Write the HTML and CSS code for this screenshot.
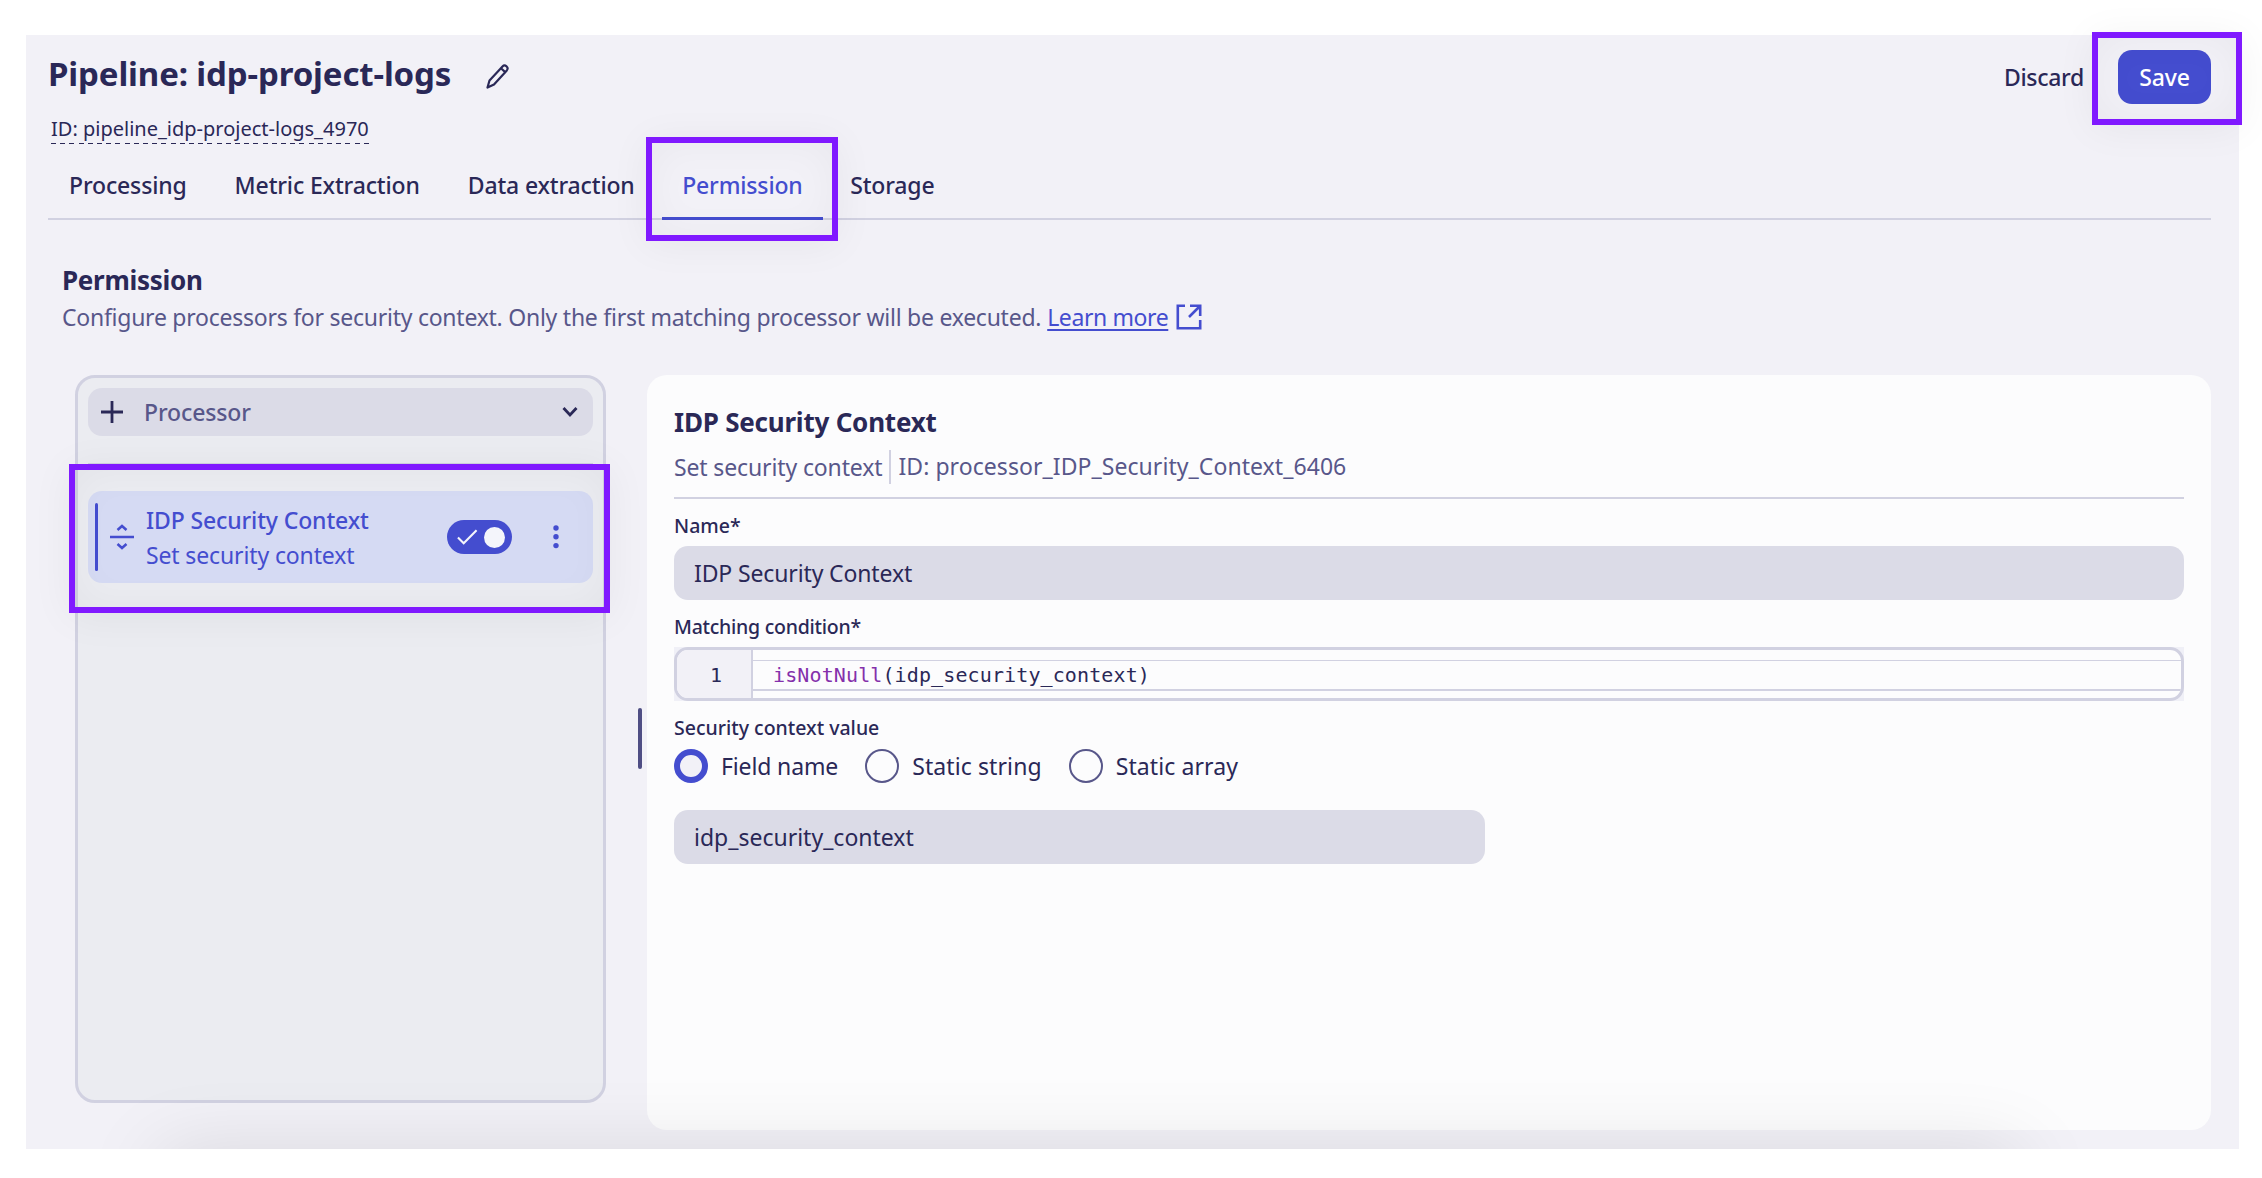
FILE: index.html
```html
<!DOCTYPE html>
<html lang="en">
<head>
<meta charset="utf-8">
<title>Pipeline: idp-project-logs</title>
<link rel="stylesheet" href="styles.css">
</head>
<body>
<main class="page">
  <header class="header">
    <div class="heading">
      <div class="title-row">
        <h1 class="title">Pipeline: idp-project-logs</h1>
        <svg class="pencil" viewBox="0 0 24 26" fill="none" stroke="currentColor" stroke-width="2.200" stroke-linejoin="round"><path d="M1.500 23.500 3.500 16.500 16.500 2.500c1.200-1.300 2.700-1.300 4-.2 1.400 1.200 1.400 2.700.3 4.100L8 20.500zM15 4.200l4.200 3.900"/></svg>
      </div>
      <div class="pipeline-id">ID: pipeline_idp-project-logs_4970</div>
    </div>
    <div class="actions">
      <button class="discard">Discard</button>
      <button class="save">Save</button>
    </div>
  </header>

  <nav class="tabs">
    <a class="tab">Processing</a>
    <a class="tab">Metric Extraction</a>
    <a class="tab">Data extraction</a>
    <a class="tab active">Permission</a>
    <a class="tab">Storage</a>
  </nav>

  <section class="intro">
    <h2 class="intro-title">Permission</h2>
    <p class="intro-text"><span>Configure processors for security context. Only the first matching processor will be executed.</span><a class="learn">Learn more</a>
      <svg class="external" viewBox="0 0 26 26" fill="none" stroke="currentColor" stroke-width="2.600"><path d="M9 1.800H1.800v22.400h22.400V16M14 1.800h10.200V12M24 2 13 13"/></svg>
    </p>
  </section>

  <div class="workspace">
    <aside class="sidebar">
      <button class="add">
        <svg class="plus" viewBox="0 0 22 22" fill="none" stroke="currentColor" stroke-width="2.800"><path d="M11 0v22M0 11h22"/></svg>
        <span class="add-label">Processor</span>
        <svg class="chevron" viewBox="0 0 16 12" fill="none" stroke="currentColor" stroke-width="2.800"><path d="m1.500 2 6.500 7 6.500-7"/></svg>
      </button>
      <div class="divider"></div>
      <div class="processor">
        <span class="marker"></span>
        <svg class="drag" viewBox="0 0 24 24" fill="none" stroke="currentColor" stroke-width="2.500"><path d="M0 12h24M7.500 5 12 1l4.500 4M7.500 19l4.500 4 4.500-4"/></svg>
        <div class="processor-text">
          <div class="processor-name">IDP Security Context</div>
          <div class="processor-kind">Set security context</div>
        </div>
        <span class="toggle">
          <svg class="check" viewBox="0 0 22 16" fill="none" stroke="currentColor" stroke-width="2.200"><path d="m1 8.500 6 6L20.500 1"/></svg>
          <span class="knob"></span>
        </span>
        <svg class="more" viewBox="0 0 6 26" fill="currentColor"><circle cx="3" cy="4" r="2.700"/><circle cx="3" cy="12.800" r="2.700"/><circle cx="3" cy="21.600" r="2.700"/></svg>
      </div>
    </aside>
    <div class="splitter"><span class="grip"></span></div>
    <section class="detail">
      <h2 class="detail-title">IDP Security Context</h2>
      <div class="detail-meta"><span>Set security context</span><span class="detail-id">ID: processor_IDP_Security_Context_6406</span></div>
      <label class="label">Name*</label>
      <div class="input">IDP Security Context</div>
      <label class="label label-condition">Matching condition*</label>
      <div class="editor-frame">
        <div class="editor">
          <div class="gutter">1</div>
          <div class="code"><div class="line"><span class="fn">isNotNull</span>(idp_security_context)</div></div>
        </div>
      </div>
      <label class="label">Security context value</label>
      <div class="radios">
        <div class="option"><span class="radio checked"></span>Field name</div>
        <div class="option option-static"><span class="radio"></span>Static string</div>
        <div class="option option-static"><span class="radio"></span>Static array</div>
      </div>
      <div class="input input-value">idp_security_context</div>
    </section>
  </div>
  <div class="dock"><div class="dock-shadow"></div></div>
  <div class="callout callout-save"></div>
  <div class="callout callout-tab"></div>
  <div class="callout callout-processor"></div>
</main>
</body>
</html>
```
FILE: styles.css
```css
* { box-sizing: border-box; }
body {
  margin: 0;
  background: #fff;
  overflow: hidden;
  font-family: "Noto Sans", "Open Sans", sans-serif;
  font-size: 23px;
  line-height: 32px;
  letter-spacing: -0.130px;
  color: #2a2857;
}
h1, h2, p { margin: 0; }
button { font: inherit; letter-spacing: inherit; color: inherit; border: 0; background: none; padding: 0; }
svg { display: block; flex: none; }

.page {
  position: relative;
  width: 2213px;
  height: 1114px;
  margin: 35px 0 0 26px;
  padding: 0 28px 0 22px;
  background: #f2f1f7;
}

/* Header */
.header { display: flex; justify-content: space-between; height: 115px; }
.title-row { display: flex; align-items: center; gap: 35px; height: 44px; margin-top: 17px; }
.title { font-size: 33px; line-height: 44px; font-weight: 700; letter-spacing: -0.130px; }
.pencil { width: 24px; height: 26px; margin-top: 6px; }
.pipeline-id {
  width: max-content;
  height: 30px;
  margin: 19px 0 0 3px;
  font-size: 20px;
  line-height: 28px;
  letter-spacing: 0;
  background: repeating-linear-gradient(90deg, #2a2857 0 5px, transparent 5px 9.200px) 0 28px / 100% 1px no-repeat;
}
.actions { display: flex; align-items: center; gap: 34px; height: 54px; margin-top: 15px; font-weight: 500; }
.discard { letter-spacing: -0.300px; }
.save { width: 93px; height: 54px; border-radius: 14px; background: #444dcf; color: #fff; }

/* Tabs */
.tabs { display: flex; gap: 6px; height: 70px; border-bottom: 2px solid #d1d1e1; font-weight: 500; letter-spacing: -0.150px; }
.tab { height: 70px; padding: 19px 21px 0; white-space: nowrap; }
.tab.active { padding: 19px 20.500px 0; color: #444dcf; border-bottom: 3px solid #444dcf; }

/* Intro */
.intro { height: 155px; padding: 42px 0 0 14px; }
.intro-title { font-size: 26px; line-height: 36px; font-weight: 700; letter-spacing: -0.280px; }
.intro-text { display: flex; align-items: center; height: 32px; margin-top: 3px; color: #58578a; white-space: nowrap; letter-spacing: -0.250px; }
.learn { margin-left: 6px; color: #444dcf; letter-spacing: -0.400px; text-decoration: underline; text-decoration-thickness: 2px; text-underline-offset: 3px; }
.external { width: 26px; height: 26px; margin-left: 8px; color: #444dcf; }

/* Workspace */
.workspace { display: flex; height: 755px; padding-left: 27px; }
.sidebar {
  width: 531px;
  height: 728px;
  padding: 10px;
  border: 3px solid #d1d1e1;
  border-radius: 20px;
  background: #ebecf1;
}
.add {
  display: flex;
  align-items: center;
  width: 100%;
  height: 48px;
  padding: 0 15px 0 13px;
  border-radius: 14px;
  background: #dbdbe7;
}
.plus { width: 22px; height: 22px; }
.add-label { margin-left: 21px; color: #58578a; font-weight: 500; }
.chevron { width: 16px; height: 12px; margin-left: auto; }
.divider { height: 2px; margin-top: 27px; background: #d1d1e1; }
.processor {
  display: flex;
  align-items: center;
  height: 92px;
  margin-top: 26px;
  padding: 0 34px 0 7px;
  border-radius: 14px;
  background: #d5daf3;
  color: #444dcf;
}
.marker { width: 3px; height: 68px; border-radius: 2px; background: #444dcf; }
.drag { width: 24px; height: 26px; margin-left: 12px; }
.processor-text { margin-left: 12px; padding-top: 2px; line-height: 35.500px; white-space: nowrap; }
.processor-name { font-weight: 500; }
.toggle {
  display: flex;
  align-items: center;
  justify-content: space-between;
  width: 65px;
  height: 34px;
  margin-left: auto;
  padding: 0 7px 0 10px;
  border-radius: 17px;
  background: #444dcf;
  color: #f4f5fb;
}
.check { width: 21px; height: 16px; }
.knob { width: 21px; height: 21px; border-radius: 50%; background: #f4f5fb; }
.more { width: 6px; height: 26px; margin-left: 41px; }

.splitter { display: flex; justify-content: flex-end; width: 41px; padding-right: 5px; }
.grip { width: 4px; height: 61px; margin-top: 333px; border-radius: 2px; background: #4f4e84; }

/* Detail form */
.detail {
  flex: 1;
  padding: 29px 27px 0;
  border-radius: 20px;
  background: #fcfcfd;
  white-space: nowrap;
}
.detail-title { font-size: 26px; line-height: 36px; font-weight: 700; letter-spacing: -0.220px; }
.detail-meta {
  display: flex;
  align-items: center;
  height: 59px;
  padding-bottom: 4px;
  border-bottom: 2px solid #d1d1e1;
  color: #58578a;
}
.detail-id { height: 34px; margin-left: 7px; padding-left: 7px; border-left: 2px solid #d1d1e1; letter-spacing: 0.060px; }
.label { display: block; height: 47px; padding-top: 13px; font-size: 19.500px; line-height: 28px; font-weight: 500; letter-spacing: 0; }
.label-condition { letter-spacing: -0.250px; }
.input { height: 54px; padding: 11px 20px; border-radius: 14px; background: #dbdbe7; }
.editor-frame { background: #f0f0f7; }
.editor {
  display: flex;
  height: 54px;
  border: 3px solid #d1d1e1;
  border-radius: 14px;
  background: #fcfcfd;
  overflow: hidden;
  font-family: "DejaVu Sans Mono", "Liberation Mono", monospace;
  font-size: 20px;
  line-height: 30px;
}
.gutter { width: 76px; padding: 10px 29px 0 0; border-right: 2px solid #d1d1e1; background: #f2f1f7; text-align: right; }
.code { flex: 1; padding-top: 10px; }
.line { height: 31px; padding-left: 20px; border: solid #d1d1e1; border-width: 1px 0 2px; line-height: 29px; letter-spacing: 0.120px; }
.fn { color: #8430ab; }
.radios { display: flex; gap: 27px; height: 34px; margin-top: 1px; }
.option { display: flex; align-items: center; gap: 13px; }
.option-static { letter-spacing: 0.100px; }
.radio { width: 34px; height: 34px; border: 2px solid #58578a; border-radius: 50%; }
.radio.checked { border: 6px solid #444dcf; background: #f2f1f7; }
.input-value { width: 811px; margin-top: 27px; letter-spacing: 0; }

/* Soft shadow along the lower edge */
.dock { position: absolute; left: 0; right: 0; bottom: 0; height: 80px; overflow: hidden; }
.dock-shadow { height: 60px; margin: 86px 219px 0 134px; box-shadow: 0 0 80px rgba(0, 0, 0, 0.130); }

/* Annotation frames */
.callout { position: absolute; border: 6px solid #8019ff; box-shadow: 0 4px 40px rgba(0, 0, 0, 0.050), inset 0 0 40px rgba(0, 0, 0, 0.040); }
.callout-save { left: 2066px; top: -3px; width: 150px; height: 93px; }
.callout-tab { left: 620px; top: 102px; width: 192px; height: 104px; }
.callout-processor { left: 43px; top: 429px; width: 541px; height: 149px; }
```
